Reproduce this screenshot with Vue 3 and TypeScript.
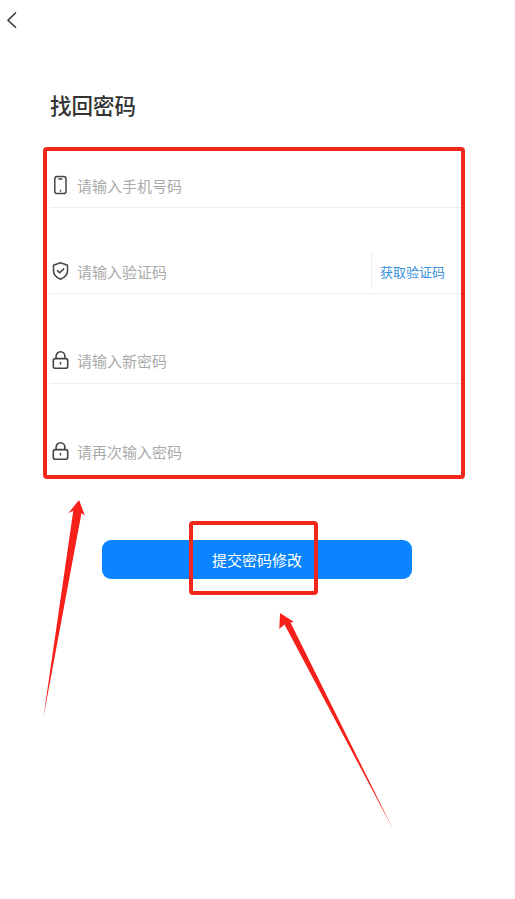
<script setup lang="ts">
const fields = [
  { key: 'phone', icon: 'phone', placeholder: '请输入手机号码' },
  { key: 'code', icon: 'shield', placeholder: '请输入验证码' },
  { key: 'pwd', icon: 'lock', placeholder: '请输入新密码' },
  { key: 'again', icon: 'lock', placeholder: '请再次输入密码' },
]
</script>

<template>
  <div class="page">
    <header class="nav">
      <svg class="back" width="14" height="18" viewBox="0 0 14 18">
        <path d="M12 1.5 4 9.2l8 7.6" fill="none" stroke="#333" stroke-width="1.5" />
      </svg>
    </header>

    <h1 class="title">找回密码</h1>

    <form class="form" @submit.prevent>
      <div v-for="f in fields" :key="f.key" class="row" :class="'row-' + f.key">
        <svg v-if="f.icon === 'phone'" class="icon" width="20" height="20" viewBox="0 0 20 20" fill="none" stroke="#444" stroke-width="1.5">
          <rect x="4.800" y="1.600" width="11.200" height="17" rx="2.400" />
          <path d="M8.900 4h3" stroke-linecap="round" />
          <circle cx="10.400" cy="15.800" r=".6" fill="#444" stroke-width=".6" />
        </svg>
        <svg v-else-if="f.icon === 'shield'" class="icon" width="20" height="20" viewBox="0 0 20 20" fill="none" stroke="#444" stroke-width="1.5">
          <path d="M10.500 1.800 17.500 4.200v5.600c0 4-3 6.800-7 8.400-4-1.600-7-4.400-7-8.400V4.200z" stroke-linejoin="round" />
          <path d="m7.400 9.600 2.300 2.200 4-3.900" stroke-linecap="round" stroke-linejoin="round" />
        </svg>
        <svg v-else class="icon" width="20" height="20" viewBox="0 0 20 20" fill="none" stroke="#444" stroke-width="1.6">
          <rect x="3.300" y="8.600" width="14.400" height="9.600" rx="2" />
          <path d="M6.100 8.600V6.200a4.400 4.400 0 0 1 8.800 0v2.400" />
          <path d="M10.500 12v2.600" stroke-width="1.400" />
        </svg>
        <input class="input" type="text" :placeholder="f.placeholder" />
        <button v-if="f.key === 'code'" class="send" type="button">获取验证码</button>
      </div>
    </form>

    <button class="submit" type="button">提交密码修改</button>

    <!-- annotations drawn over the screenshot -->
    <div class="mark mark-form"></div>
    <div class="mark mark-btn"></div>
    <svg class="arrows" width="515" height="899" viewBox="0 0 515 899">
      <path d="M43.300 718 73.300 510.700 68.300 513.300 79 500 85 515.700 81.500 513z" fill="#f8201a" />
      <path d="M393 829 290.500 622.500 294 622 280 613 279.300 629 284.500 624.500z" fill="#f8201a" />
    </svg>
  </div>
</template>

<style scoped>
.page {
  position: relative;
  width: 515px;
  height: 899px;
  overflow: hidden;
  background: #fff;
  font-family: "Noto Sans CJK SC", "Liberation Sans", sans-serif;
}

.nav {
  height: 30px;
  padding: 11px 0 0 4px;
  box-sizing: border-box;
}

.back {
  display: block;
}

.title {
  margin: 60px 0 0 50px;
  height: 30px;
  font-size: 21.500px;
  line-height: 30px;
  font-weight: 500;
  color: #333;
}

.form {
  margin: 0 54px 0 50px;
  padding-top: 45px;
}

.row {
  display: flex;
  align-items: center;
  height: 42px;
  border-bottom: 1px solid #eeeeee;
  box-sizing: content-box;
}

.row-code {
  margin-top: 43px;
}

.row-pwd {
  margin-top: 47px;
  align-items: flex-start;
  padding-top: 9px;
  height: 33px;
}

.row-again {
  margin-top: 48px;
  border-bottom: none;
  align-items: flex-start;
  padding-top: 9px;
  height: 37px;
}

.icon {
  flex: none;
  margin-top: -2px;
}

.row-pwd .icon,
.row-again .icon {
  margin-top: 0;
}

.input {
  flex: 1;
  min-width: 0;
  margin-left: 8px;
  padding: 0;
  border: none;
  outline: none;
  background: transparent;
  font: inherit;
  font-size: 15px;
  line-height: 22px;
  color: #333;
  transform: translateX(-1px);
}

.input::placeholder {
  color: #aaaaaa;
  opacity: 1;
}

.send {
  flex: none;
  width: 90px;
  height: 36px;
  margin: -2px 0 0;
  padding: 0 0 0 8px;
  border: none;
  border-left: 1px solid #eeeeee;
  background: transparent;
  text-align: left;
  font: inherit;
  font-size: 13px;
  color: #3a8fdd;
}

.submit {
  display: block;
  width: 310px;
  height: 39px;
  margin: 62px 0 0 102px;
  border: none;
  border-radius: 9px;
  background: #0a84ff;
  font: inherit;
  font-size: 15px;
  color: #fff;
}

.mark {
  position: absolute;
  box-sizing: border-box;
  border: 4px solid #f1271d;
  border-radius: 4px;
  pointer-events: none;
}

.mark-form {
  left: 43px;
  top: 147px;
  width: 422px;
  height: 332px;
}

.mark-btn {
  left: 189px;
  top: 521px;
  width: 129px;
  height: 74px;
}

.arrows {
  position: absolute;
  left: 0;
  top: 0;
  pointer-events: none;
}
</style>

<style>
html,
body {
  margin: 0;
  background: #fff;
}
</style>
